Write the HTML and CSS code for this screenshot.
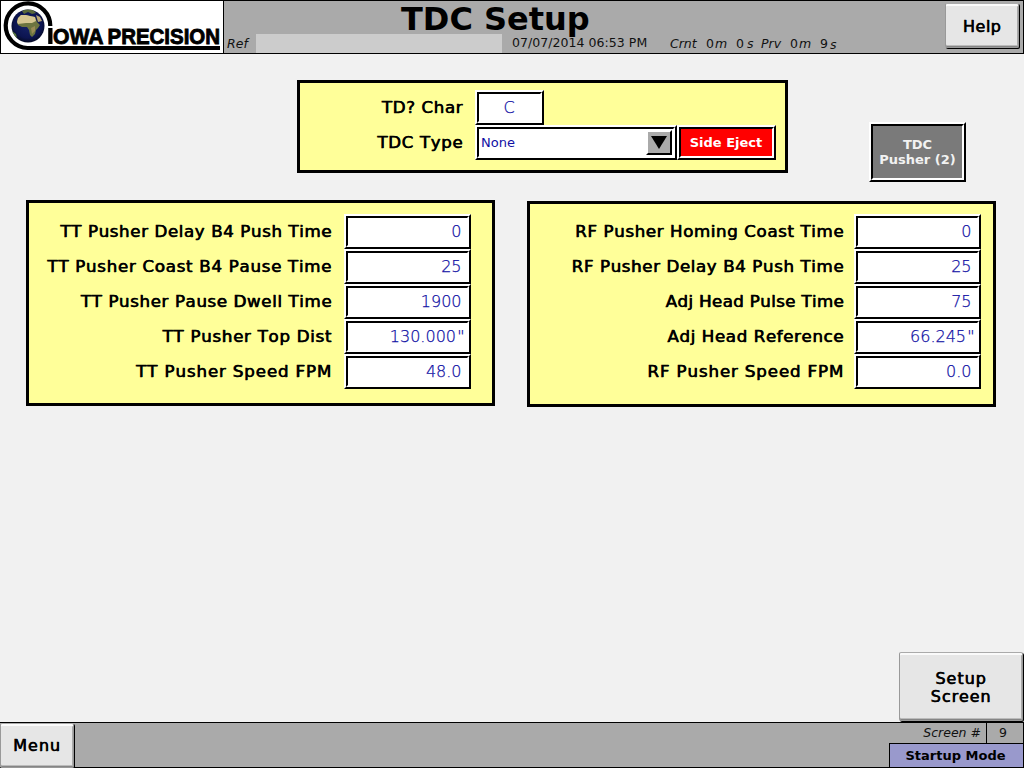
FILE: index.html
```html
<!DOCTYPE html>
<html lang="en">
<head>
<meta charset="utf-8">
<title>TDC Setup</title>
<link rel="stylesheet" href="styles.css">
</head>
<body>
<div class="screen">
  <header class="header">
    <div class="logo">
      <svg width="222" height="52" viewBox="1 1 222 52">
        <defs>
          <radialGradient id="sea" cx="0.5" cy="0.45" r="0.55">
            <stop offset="0" stop-color="#16246a"/>
            <stop offset="0.75" stop-color="#0c1450"/>
            <stop offset="1" stop-color="#050a24"/>
          </radialGradient>
          <clipPath id="disc"><circle cx="28" cy="26" r="16.5"/></clipPath>
        </defs>
        <path d="M50.3 26 A22.3 22.3 0 1 0 27.5 48 H220" fill="none" stroke="#000" stroke-width="4.2"/>
        <path d="M48.2 28h4.3v16h-4.3z"/>
        <circle cx="28" cy="26" r="16.5" fill="url(#sea)"/>
        <g clip-path="url(#disc)">
          <path d="M18 18L21 15 26 15 30 16 35 17 37 22 40 25 38 28 36 30 35 34 32 37 30 35 29 30 27 27 22 27 18 25 17 22z" fill="#6c7440"/>
          <path d="M18 18L21 15 26 15 30 16 35 17 36 21 32 23 26 23 18 24 17 22z" fill="#d5c591"/>
          <path d="M31 28L35 26 35 31 32 34z" fill="#9a8b55"/>
          <path d="M22 11L27 9 33 10 36 13 32 14 28 12 24 14z" fill="#59683a"/>
          <path d="M36 15L40 17 42 21 38 22z" fill="#b9a774"/>
          <path d="M12 31L16 34 17 38 13 36z" fill="#56743d"/>
        </g>
        <g class="logo-text">
          <text x="53" y="44" textLength="50.5" lengthAdjust="spacingAndGlyphs">OWA</text>
          <text x="107.5" y="44" textLength="112.5" lengthAdjust="spacingAndGlyphs">PRECISION</text>
        </g>
      </svg>
    </div>
    <div class="header-main">
      <h1 class="title">TDC Setup</h1>
      <div class="status">
        <i class="ref-label">Ref</i>
        <span class="ref-value"></span>
        <span class="date">07/07/2014 06:53 PM</span>
        <i class="crnt">Crnt</i><span class="num">0</span><i class="unit-m">m</i><span class="num num-s">0</span><i class="unit-s">s</i>
        <i class="prv">Prv</i><span class="num">0</span><i class="unit-m">m</i><span class="num num-s">9</span><i class="unit-s low">s</i>
      </div>
    </div>
    <button class="key key-help">Help</button>
  </header>

  <main class="main">
    <div class="top-row">
      <section class="panel panel-top">
        <div class="row"><label class="label">TD? Char</label><div class="bevel char"><div class="face center">C</div></div></div>
        <div class="row"><label class="label">TDC Type</label>
          <div class="bevel type"><div class="face select"><span>None</span>
            <span class="drop"><svg width="16" height="13" viewBox="0 0 16 13"><path d="M0 0H16L8 13z"/></svg></span></div></div>
          <div class="bevel eject"><div class="face red">Side Eject</div></div>
        </div>
      </section>
      <div class="bevel pusher"><div class="face gray">TDC<br>Pusher (2)</div></div>
    </div>

    <div class="panels">
      <section class="panel panel-left">
        <div class="row"><label class="label">TT Pusher Delay B4 Push Time</label><div class="bevel"><div class="face value">0</div></div></div>
        <div class="row"><label class="label wide">TT Pusher Coast B4 Pause Time</label><div class="bevel"><div class="face value">25</div></div></div>
        <div class="row"><label class="label">TT Pusher Pause Dwell Time</label><div class="bevel"><div class="face value">1900</div></div></div>
        <div class="row"><label class="label wide">TT Pusher Top Dist</label><div class="bevel"><div class="face value inches">130.000<span class="inch">"</span></div></div></div>
        <div class="row"><label class="label wider">TT Pusher Speed FPM</label><div class="bevel"><div class="face value">48.0</div></div></div>
      </section>
      <section class="panel panel-right">
        <div class="row"><label class="label">RF Pusher Homing Coast Time</label><div class="bevel"><div class="face value">0</div></div></div>
        <div class="row"><label class="label">RF Pusher Delay B4 Push Time</label><div class="bevel"><div class="face value">25</div></div></div>
        <div class="row"><label class="label tight">Adj Head Pulse Time</label><div class="bevel"><div class="face value">75</div></div></div>
        <div class="row"><label class="label">Adj Head Reference</label><div class="bevel"><div class="face value inches">66.245<span class="inch">"</span></div></div></div>
        <div class="row"><label class="label wider">RF Pusher Speed FPM</label><div class="bevel"><div class="face value">0.0</div></div></div>
      </section>
    </div>

    <button class="key key-setup">Setup<br>Screen</button>
  </main>

  <footer class="footer">
    <button class="key key-menu">Menu</button>
    <div class="info">
      <div class="screen-no"><i>Screen #</i><span class="screen-id">9</span></div>
      <div class="mode">Startup Mode</div>
    </div>
  </footer>
</div>
</body>
</html>
```
FILE: styles.css
```css
* { box-sizing: border-box; }
body { margin: 0; font-family: "DejaVu Sans", sans-serif; color: #000; }
.screen { width: 1024px; height: 768px; display: flex; flex-direction: column; background: #f1f1f1; overflow: hidden; font-kerning: none; }

/* header */
.header { height: 54px; display: flex; background: #aaa; border: 1px solid #000; }
.logo { width: 223px; background: #fff; border-right: 1px solid #000; }
.logo svg { display: block; }
.logo-text { font: bold 22.5px "Liberation Sans", sans-serif; stroke: #000; stroke-width: 0.9px; }
.header-main { width: 720px; display: flex; flex-direction: column; }
.title { margin: 0 0 0 177px; height: 33px; font-size: 32px; line-height: 37px; white-space: nowrap; }
.status { height: 19px; display: flex; align-items: stretch; font-size: 12.5px; line-height: 17px; white-space: nowrap; color: #111; }
.ref-label { width: 32px; padding-left: 3px; line-height: 19px; }
.ref-value { width: 246px; background: #ccc; }
.date { width: 168px; padding-left: 10px; letter-spacing: 0.05px; }
.crnt, .prv { line-height: 19px; }
.crnt { width: 36px; }
.prv { width: 29px; }
.num { width: 9px; line-height: 19px; }
.unit-m { width: 21px; padding-left: 0; line-height: 19px; }
.num-s { width: 11px; }
.unit-s { width: 14px; line-height: 19px; }
.low { line-height: 22px; margin-left: -1px; }

/* raised push keys */
.key { margin: 0; padding: 0; font: 16px/18px "DejaVu Sans", sans-serif; letter-spacing: 1px; color: #000;
  -webkit-text-stroke: 0.3px #000; text-shadow: 0.5px 0 #000; background: #e6e6e6; border: 1px solid #999; border-top-color: #aaa; border-radius: 2px;
  box-shadow: inset 0 2px #fafafa, inset 0 -1px #858585, inset 0 -2px #bbb, inset -1px 0 #aaa, 1px 1px #000; }
.key-help { width: 74px; height: 45px; margin: 2px 0 0 1px; padding-top: 2px; letter-spacing: 0.5px; }
.key-setup { width: 124px; height: 69px; margin: auto 1px 1px auto; padding-top: 2px; }
.key-menu { width: 74px; height: 45px; }

/* sunken, double-edged fields */
.bevel { width: 127px; height: 35px; flex: none; border: 2px solid; border-color: #fff #000 #000 #fff; }
.face { height: 100%; border: 2px solid; border-color: #000 #fff #fff #000; background: #fff; color: #1010a4;
  font-size: 16px; font-weight: 200; line-height: 27px; -webkit-text-stroke: 0.25px; }
.center { text-align: center; padding-right: 1px; }
.value { text-align: right; padding-right: 5.5px; }
.inches { padding-right: 0; }
.inch { display: inline-block; width: 11px; padding-right: 1px; text-align: center; }

/* yellow panels */
.panel { background: #ff9; border: 3px solid #000; }
.row { display: flex; height: 35px; }
.label { text-align: right; font-size: 16px; line-height: 36px; letter-spacing: 0.55px; white-space: nowrap;
  -webkit-text-stroke: 0.3px #000; text-shadow: 0.5px 0 #000; transform: scaleX(1.045); transform-origin: right; }
.tight { letter-spacing: 0.32px; }
.wide { letter-spacing: 0.65px; }
.wider { letter-spacing: 0.8px; }
.main { flex: 1; display: flex; flex-direction: column; }
.top-row { display: flex; height: 146px; padding: 26px 0 0 297px; align-items: flex-start; }
.panel-top { width: 491px; height: 93px; padding-top: 7px; }
.panel-top .label { width: 163px; margin-right: 12px; }
.char { width: 69px; }
.type { width: 202px; }
.select { display: flex; justify-content: space-between; font-size: 13px; font-weight: 400; padding: 1px 1px 0 2px; line-height: 25px; -webkit-text-stroke: 0; }
.drop { width: 26px; height: 25px; padding: 4px 3px; border: 2px solid; border-color: #fff #000 #000 #fff; background: #aaa; line-height: 0; }
.eject { width: 99px; }
.red, .gray { font-size: 13px; font-weight: 700; line-height: 27px; text-align: center; color: #fff; -webkit-text-stroke: 0; }
.red { background: #f00; padding-right: 1px; }
.pusher { width: 97px; height: 60px; margin: 42px 0 0 81px; }
.gray { background: #7a7a7a; line-height: 15px; padding-top: 11px; color: #f2f2f2; }
.panels { display: flex; gap: 32px; padding-left: 26px; }
.panel-left { width: 469px; height: 206px; padding-top: 11px; }
.panel-right { width: 469px; height: 206px; margin-top: 1px; padding-top: 10px; }
.panel-left .label { width: 303px; margin-right: 12px; }
.panel-right .label { width: 314px; margin-right: 10px; }

/* footer */
.footer { height: 46px; display: flex; justify-content: space-between; background: #aaa;
  border: 1px solid #000; border-left: 0; }
.info { width: 134px; }
.screen-no { height: 20px; display: flex; justify-content: flex-end; font-size: 12.5px; line-height: 19px; color: #111; }
.screen-id { width: 37px; margin-left: 5px; border-left: 1px solid #000; text-align: center; padding-right: 4px; }
.mode { height: 24px; background: #99c; border: 1px solid #000; border-width: 1px 0 0 1px; text-align: center;
  font-size: 13px; font-weight: 700; line-height: 24px; padding-right: 2px; }
```
